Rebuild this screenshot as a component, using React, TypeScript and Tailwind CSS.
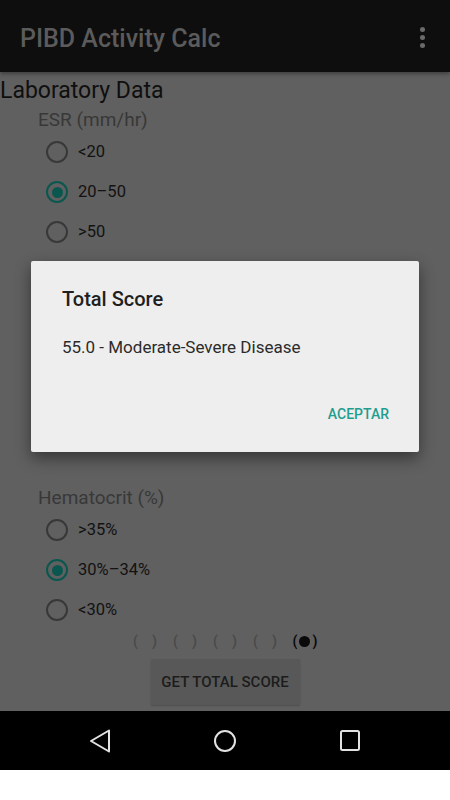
const font = { fontFamily: 'Roboto, "Noto Sans", sans-serif' }

type Option = { label: string; checked?: boolean }

function Radio({ label, checked }: Option) {
  return (
    <div className="flex items-center h-[40px] pl-[46px] gap-[10px]">
      <span
        className={`w-[22px] h-[22px] rounded-full border-2 flex items-center justify-center ${
          checked ? 'border-[#0a574f]' : 'border-[#383838]'
        }`}
      >
        {checked && <span className="w-[11px] h-[11px] rounded-full bg-[#0a574f]" />}
      </span>
      <span className="text-[16.5px] text-[#121212] leading-[20px]">{label}</span>
    </div>
  )
}

function Section({ title, options, className }: { title: string; options: Option[]; className?: string }) {
  return (
    <div className={className}>
      <p className="pl-[38px] text-[19px] leading-[24px] text-[#383838]">{title}</p>
      {options.map((item) => (
        <Radio key={item.label} {...item} />
      ))}
    </div>
  )
}

function Dots() {
  return (
    <div className="flex justify-center h-[22px] items-center">
      {[0, 1, 2, 3].map((i) => (
        <span key={i} className="w-[40px] flex justify-center">
          <span className="w-[24px] flex justify-between text-[14px] font-bold text-[#4a4a4a]">
            <span>(</span>
            <span>)</span>
          </span>
        </span>
      ))}
      <span className="w-[40px] flex items-center justify-center gap-[2px] text-[14px] font-bold text-[#0a0a0a]">
        (<span className="w-[11px] h-[11px] rounded-full bg-[#0a0a0a]" />)
      </span>
    </div>
  )
}

export default function App() {
  return (
    <div className="w-[450px] h-[800px] flex flex-col bg-white overflow-hidden" style={font}>
      <header className="h-[72px] bg-[#0e0e0e] flex items-center justify-between pl-[20px] pr-[25px] shadow-[0_2px_4px_rgba(0,0,0,0.35)] relative z-10">
        <h1 className="text-[25px] font-medium text-[#5b5b5b] pt-[6px]">PIBD Activity Calc</h1>
        <div className="flex flex-col gap-[3px] pt-[2px]">
          <span className="w-[5px] h-[5px] rounded-full bg-[#6a6a6a]" />
          <span className="w-[5px] h-[5px] rounded-full bg-[#6a6a6a]" />
          <span className="w-[5px] h-[5px] rounded-full bg-[#6a6a6a]" />
        </div>
      </header>

      <main className="h-[639px] bg-[#606060] relative overflow-hidden">
        <h2 className="pt-[6px] text-[23px] leading-[26px] text-[#0f0f0f]">Laboratory Data</h2>
        <Section
          className="mt-[4px]"
          title="ESR (mm/hr)"
          options={[{ label: '<20' }, { label: '20–50', checked: true }, { label: '>50' }]}
        />
        {/* rows hidden behind the dialog */}
        <div className="h-[234px]" />
        <Section
          title="Hematocrit (%)"
          options={[{ label: '>35%' }, { label: '30%–34%', checked: true }, { label: '<30%' }]}
        />
        <Dots />
        <div className="flex justify-center mt-[7px]">
          <button className="w-[149px] h-[46px] rounded-[2px] bg-[#585858] text-[15px] font-medium text-[#1c1c1c] shadow-[0_1px_2px_rgba(0,0,0,0.2)]">
            GET TOTAL SCORE
          </button>
        </div>

        <div className="absolute left-[31px] top-[189px] w-[388px] h-[191px] bg-[#eeeeee] rounded-[2px] shadow-[0_6px_16px_rgba(0,0,0,0.45)] flex flex-col">
          <p className="pl-[31px] pt-[25px] text-[20px] font-medium text-[#1f1f1f] leading-[26px]">Total Score</p>
          <p className="pl-[31px] pt-[24px] text-[17px] text-[#2b2b2b] leading-[22px]">
            55.0 - Moderate-Severe Disease
          </p>
          <div className="flex justify-end mt-auto pb-[27px] pr-[30px]">
            <span className="text-[14px] font-medium text-[#1f9d8f]">ACEPTAR</span>
          </div>
        </div>
      </main>

      <nav className="h-[59px] bg-black flex items-center justify-between px-[88px]">
        <svg width="24" height="24" viewBox="0 0 24 24" fill="none" stroke="#e2e2e2" strokeWidth="2" strokeLinejoin="round">
          <path d="M21 1.5 L3 12 L21 22.5 Z" />
        </svg>
        <svg width="24" height="24" viewBox="0 0 24 24" fill="none" stroke="#e2e2e2" strokeWidth="2">
          <circle cx="12" cy="12" r="10" />
        </svg>
        <svg width="24" height="24" viewBox="0 0 24 24" fill="none" stroke="#e2e2e2" strokeWidth="2">
          <rect x="3" y="2" width="18" height="19" rx="1.5" />
        </svg>
      </nav>
      <div className="h-[30px] bg-white" />
    </div>
  )
}
